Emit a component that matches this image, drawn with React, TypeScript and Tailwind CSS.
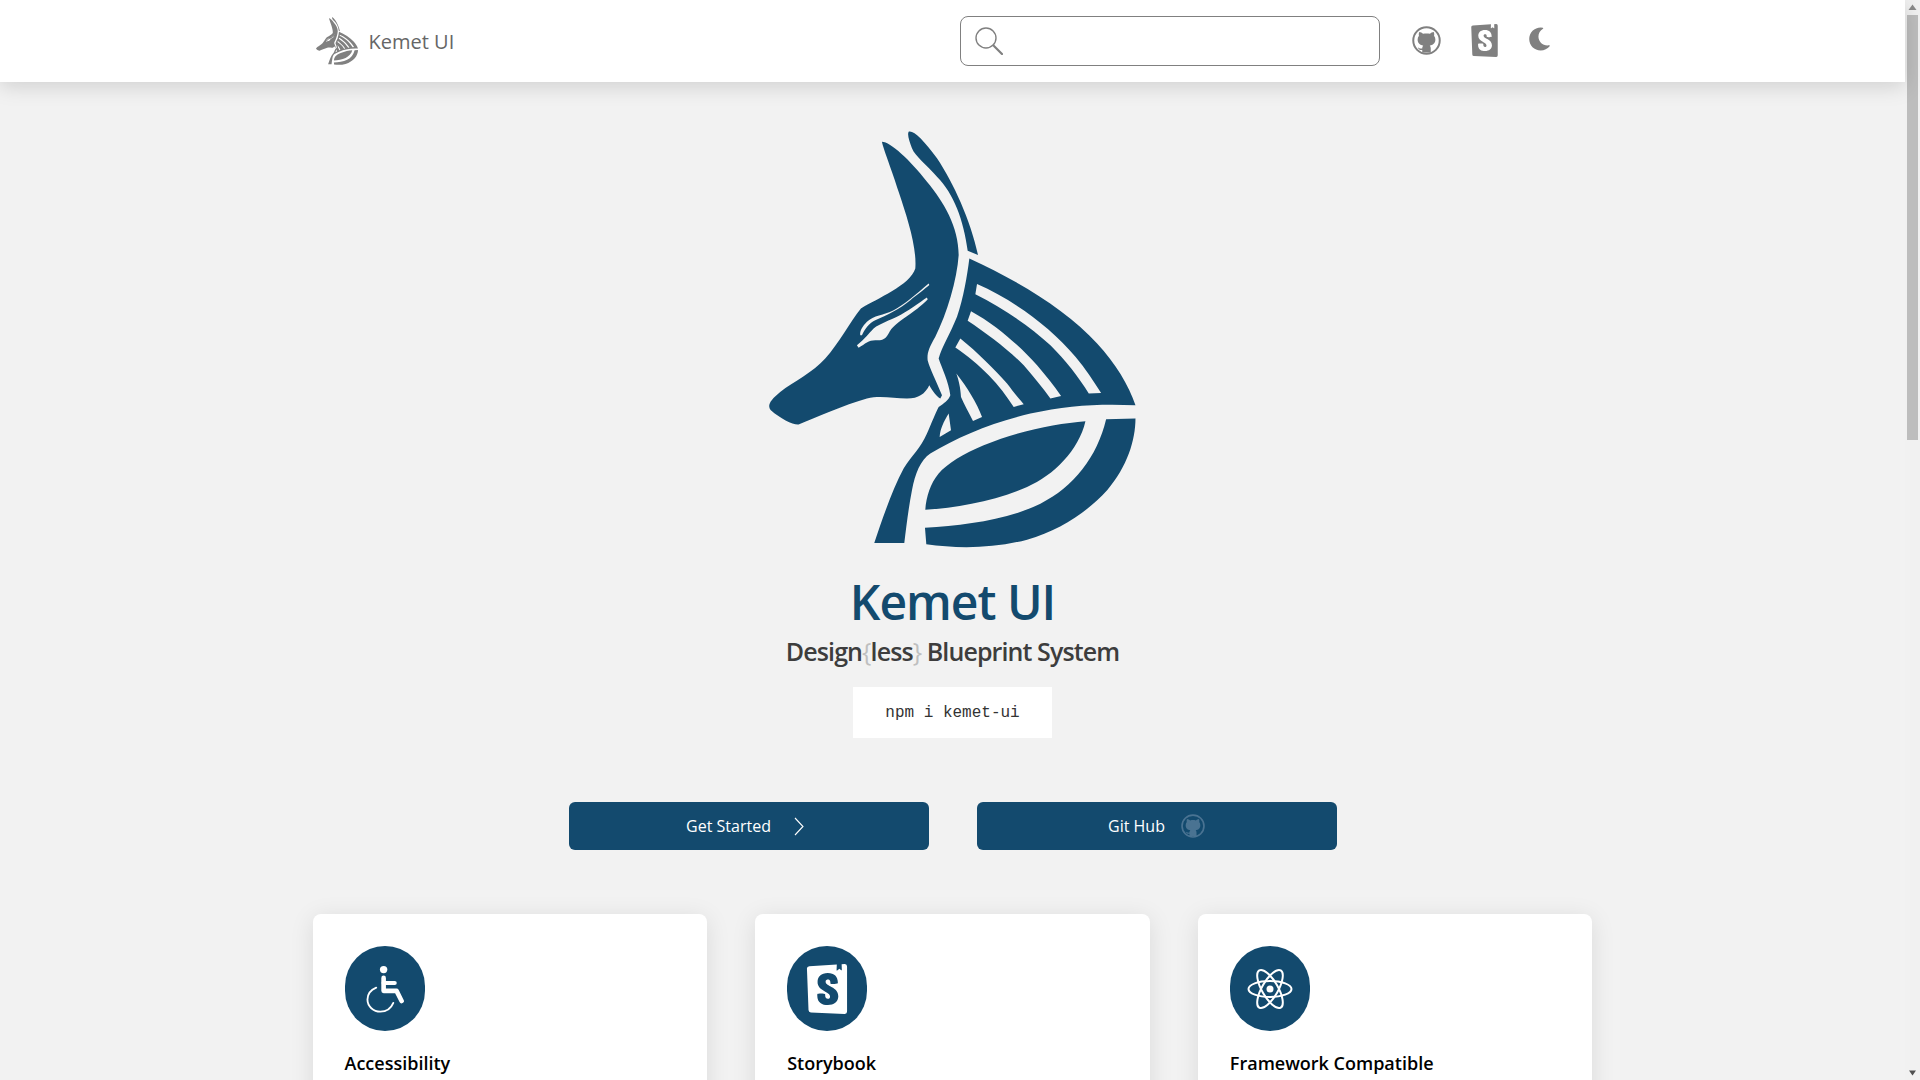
import { SiStorybook } from "react-icons/si";
import { FaMoon } from "react-icons/fa";

function Anubis({ className }: { className: string }) {
  return (
    <svg viewBox="55 33 1100 1250" className={className} fill="currentColor" fillRule="evenodd">
      <path d="M475 35C490 30 520 60 560 115C610 190 660 300 683 405L652 392C640 300 610 220 560 170C530 135 495 110 485 85C478 65 470 45 475 35Z" />
      <path d="M395 65C420 65 480 120 530 185C580 245 625 320 625 405C620 480 590 580 555 650C535 685 530 700 532 720C540 750 555 775 575 825L570 835C560 830 545 810 537 795C525 820 505 835 470 835C430 835 390 825 350 835C280 855 200 890 145 913C130 915 90 895 62 870C50 855 60 840 90 815C130 785 190 755 225 715C265 670 300 605 332 565C380 535 480 495 495 445C500 380 470 290 445 215C425 150 400 90 395 65Z
        M535 490C500 520 460 555 430 570C400 585 370 585 350 605C335 620 328 635 330 645L335 645C345 625 355 610 375 600C410 585 450 565 480 540C500 525 525 505 537 495Z
        M530 532C510 545 470 575 440 590C420 600 390 610 370 625C355 640 345 655 320 675L325 683C345 670 355 660 375 660C395 662 405 658 415 640C425 620 440 610 460 595C490 575 515 555 532 538Z" />
      <path d="M657 415C800 480 950 570 1040 670C1095 730 1135 795 1155 855C1050 850 950 855 840 880C730 905 620 950 540 1000C510 1020 495 1060 485 1110C475 1160 468 1220 462 1268L372 1268C395 1200 425 1110 460 1045C485 1005 510 985 530 940C545 905 555 880 565 860C580 850 595 840 600 825C595 785 575 745 565 715C575 680 600 640 620 590C640 530 650 470 657 415Z
        M680 492C790 540 900 620 975 710C1005 745 1030 785 1052 818L1015 820C985 770 945 720 900 675C840 620 760 565 675 522Z
        M662 573C740 615 810 680 860 735C885 765 910 795 932 827L900 835C875 800 850 770 820 735C775 690 710 640 652 602Z
        M630 655C680 695 730 745 770 790C785 810 805 835 820 852L790 860C770 830 745 795 715 765C685 735 650 705 615 682Z
        M618 760C650 800 680 850 695 890L668 902C655 875 640 850 632 830C630 800 625 780 618 760Z
        M595 880L602 930L568 950C570 925 580 905 595 880Z" />
      <path d="M1005 903C920 910 810 930 700 975C640 1000 590 1030 565 1060C540 1090 528 1130 525 1168C620 1163 740 1140 830 1100C910 1065 985 990 1005 903Z" />
      <path d="M1067 897L1155 895C1155 960 1130 1040 1070 1110C1010 1175 930 1230 830 1258C730 1285 620 1285 528 1272L524 1222C640 1215 770 1200 870 1150C970 1100 1040 1010 1067 897Z" />
    </svg>
  );
}

function GithubRing({ className }: { className: string }) {
  return (
    <svg viewBox="0 0 32 32" className={className} fill="currentColor">
      <circle cx="16" cy="16" r="14.6" fill="none" stroke="currentColor" strokeWidth="2.2" />
      <path d="M8 6.5C9.6 6.6 11.2 7.5 12.3 8.6C14.3 8 17.7 8 19.7 8.6C20.8 7.5 22.4 6.6 24 6.5C24.6 8 24.7 9.6 24.3 10.8C25.3 12 25.8 13.4 25.8 15C25.8 19.4 23 21.2 19.6 21.7C20.4 22.4 20.7 23.4 20.7 24.8L20.7 29.2L11.3 29.2L11.3 26.4C9 26.8 7.4 26 6.5 23.6C7.8 23.9 8.8 25.4 11.3 24.8C11.3 23.4 11.6 22.4 12.4 21.7C9 21.2 6.2 19.4 6.2 15C6.2 13.4 6.7 12 7.7 10.8C7.3 9.6 7.4 8 8 6.5Z" />
    </svg>
  );
}

function Wheelchair({ className }: { className: string }) {
  return (
    <svg viewBox="0 0 41 52" className={className} fill="none" stroke="white" strokeLinecap="round" strokeLinejoin="round">
      <circle cx="19" cy="5" r="4" fill="white" stroke="none" />
      <path d="M19 14V28H33L38.5 39" strokeWidth="5" />
      <path d="M19 19.5H31" strokeWidth="4.5" />
      <path d="M11 24.5C5 27 1.5 32 1.5 37.5C1.5 45 8 50.5 15.5 50.5C22 50.5 27 47 29.5 41" strokeWidth="2" />
    </svg>
  );
}

function AtomIcon({ className }: { className: string }) {
  return (
    <svg viewBox="0 0 46 42" className={className} fill="none" stroke="white" strokeWidth="2">
      <ellipse cx="23" cy="21" rx="21.5" ry="8" />
      <ellipse cx="23" cy="21" rx="21.5" ry="8" transform="rotate(60 23 21)" />
      <ellipse cx="23" cy="21" rx="21.5" ry="8" transform="rotate(-60 23 21)" />
      <circle cx="23" cy="21" r="3.5" fill="white" stroke="none" />
    </svg>
  );
}

const cards = [
  { title: "Accessibility", icon: <Wheelchair className="w-[38px] h-[48px]" /> },
  { title: "Storybook", icon: <SiStorybook className="w-[50px] h-[50px] text-white" /> },
  { title: "Framework Compatible", icon: <AtomIcon className="w-[46px] h-[42px]" /> },
];

export default function App() {
  return (
    <div className="flex h-screen overflow-hidden bg-[#f2f2f2] font-['Open_Sans',sans-serif]">
      <div className="flex-1 min-w-0">
        <header className="h-[82px] bg-white shadow-[0_4px_20px_rgba(0,0,0,0.15)] relative">
          <div className="w-[1280px] mx-auto h-full flex items-center">
            <a className="flex items-center ml-[3px] text-[#666666]">
              <Anubis className="w-[42px] h-[48px] text-[#808080]" />
              <span className="ml-[11px] mt-[2px] text-[20px]">Kemet UI</span>
            </a>
            <div className="ml-auto w-[420px] h-[50px] rounded-lg border border-[#808080] flex items-center pl-[14px]">
              <svg viewBox="0 0 28 28" className="w-7 h-7" fill="none" stroke="#808080">
                <circle cx="11" cy="11" r="10" strokeWidth="1.4" />
                <path d="M18.5 18.5L27 27" strokeWidth="2.2" strokeLinecap="round" />
              </svg>
            </div>
            <GithubRing className="ml-8 mb-[2px] w-[29px] h-[29px] text-[#808080]" />
            <SiStorybook className="ml-[27px] mb-[2px] w-[33px] h-[33px] text-[#808080]" />
            <FaMoon className="ml-[27px] mr-[42px] mb-[4px] w-[23px] h-[24px] text-[#808080]" />
          </div>
        </header>

        <main className="w-[1280px] mx-auto">
          <section className="flex flex-col items-center pt-[49px]">
            <Anubis className="w-[368px] h-[417px] mr-[2px] text-[#134a6e]" />
            <h1 className="mt-[24px] text-[48px] leading-[60px] font-semibold tracking-[-1px] text-[#134a6e]">Kemet UI</h1>
            <p className="mt-[1px] text-[25px] leading-[36px] font-semibold tracking-[-0.9px] text-[#3d3d3d]">
              Design<span className="text-[#bfbfbf] font-normal">{"{"}</span>less<span className="text-[#bfbfbf] font-normal">{"}"}</span> Blueprint System
            </p>
            <code className="mt-[18px] px-8 pt-[15px] pb-[13px] bg-white font-['Liberation_Mono',monospace] text-[16px] leading-[23px] text-[#333333]">npm i kemet-ui</code>
            <div className="mt-[64px] flex gap-12">
              <button className="w-[360px] h-12 pr-[7px] rounded-md bg-[#134a6e] text-white text-[16px] flex items-center justify-center gap-[23px]">
                Get Started
                <svg viewBox="0 0 10 19" className="w-[10px] h-[19px]" fill="none" stroke="white" strokeWidth="1.1">
                  <path d="M1 1L9 9.5L1 18" />
                </svg>
              </button>
              <button className="w-[360px] h-12 rounded-md bg-[#134a6e] text-white text-[16px] flex items-center justify-center gap-4">
                Git Hub
                <GithubRing className="w-6 h-6 text-[#4a7392]" />
              </button>
            </div>
          </section>

          <section className="mt-[64px] grid grid-cols-3 gap-12">
            {cards.map((card) => (
              <div key={card.title} className="h-[300px] bg-white rounded-lg p-8 shadow-[0_4px_24px_rgba(0,0,0,0.1)]">
                <div className="w-20 h-[85px] rounded-full bg-[#134a6e] flex items-center justify-center">{card.icon}</div>
                <h3 className="mt-[19px] text-[18px] leading-[27px] font-semibold text-black">{card.title}</h3>
              </div>
            ))}
          </section>
        </main>
      </div>

      <div className="w-[15px] shrink-0 bg-[#f1f1f1] flex flex-col items-center">
        <svg viewBox="0 0 15 15" className="w-[15px] h-[15px] shrink-0" fill="#8a8a8a"><path d="M7.5 4.5L11.5 10H3.5Z" /></svg>
        <div className="w-[11px] h-[425px] bg-[#bdbdbd]" />
        <svg viewBox="0 0 15 15" className="w-[15px] h-[15px] mt-auto shrink-0" fill="#505050"><path d="M7.5 10.5L11 5.5H4Z" /></svg>
      </div>
    </div>
  );
}
